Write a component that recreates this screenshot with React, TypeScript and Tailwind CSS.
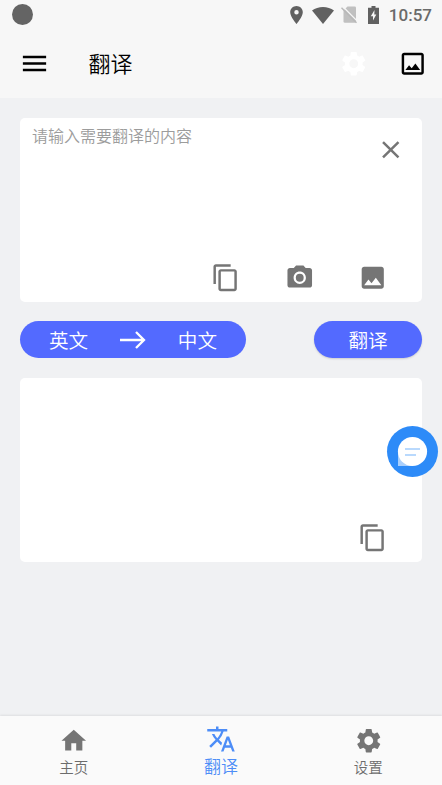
import type { ReactNode } from 'react'
import {
  MdClose,
  MdContentCopy,
  MdHome,
  MdImage,
  MdMenu,
  MdOutlineImage,
  MdPhotoCamera,
  MdSettings,
  MdTranslate,
} from 'react-icons/md'

function StatusBar() {
  return (
    <div className="flex h-[30px] items-center pl-3 pr-[10px] text-[#616161]">
      <span className="-mt-px size-[21px] rounded-full bg-[#646464]" />
      <svg className="ml-auto h-[18px] w-[13px]" viewBox="5 2 14 20" fill="currentColor">
        <path d="M12 2C8.13 2 5 5.13 5 9c0 5.25 7 13 7 13s7-7.75 7-13c0-3.87-3.13-7-7-7zm0 9.5a2.5 2.5 0 0 1 0-5 2.5 2.5 0 0 1 0 5z" />
      </svg>
      <svg className="ml-[9px] h-[17px] w-[22px]" viewBox="0 0 22 17" fill="currentColor">
        <path d="M0 3.6C6-1.2 16-1.2 22 3.6L11 17z" />
      </svg>
      <svg className="ml-[7px] h-[18px] w-[17px]" viewBox="0 0 17 18">
        <path d="M6.500 .5H13.700q1.300 0 1.300 1.300V15.500q0 1.300-1.300 1.300H3.800Q2.500 16.800 2.500 15.500V4.500z" fill="#c0c0c0" />
        <path d="M2 .8L17 15.800" stroke="#f7f7f7" strokeWidth="1.300" />
        <path d="M.5 1.800L15.500 16.800" stroke="#b8b8b8" strokeWidth="1.400" />
      </svg>
      <svg className="ml-[10px] h-[18px] w-[11px]" viewBox="0 0 11 18">
        <path d="M3.500 0h4v1.800H11V18H0V1.800h3.500z" fill="currentColor" />
        <path d="M6.500 4L2.800 10.200h2.200V14.500L8.300 8.600H6.300z" fill="#f7f7f7" />
      </svg>
      <span className="ml-[9.5px] font-['Roboto',sans-serif] text-[17px] font-medium leading-[20px] text-[#6a6a6a]">10:57</span>
    </div>
  )
}

function Header() {
  return (
    <header className="h-[98px] bg-[#f7f7f7]">
      <StatusBar />
      <div className="flex h-[67px] items-center pl-[19px] pr-[15px] text-black">
        <MdMenu className="size-[31px]" />
        <h1 className="-mt-[3px] ml-[38.5px] text-[22px] font-[350] leading-[32px]">翻译</h1>
        <MdSettings className="ml-auto size-[29.5px] text-white" />
        <MdOutlineImage className="ml-[29px] size-[29.5px]" />
      </div>
    </header>
  )
}

function InputCard() {
  return (
    <section className="flex h-[184px] flex-col rounded-[5px] bg-white text-[#757575]">
      <div className="flex justify-between pl-[12px] pr-[17px]">
        <p className="mt-[5px] text-[16px] font-[350] leading-[24px] text-[#9c9c9c]">请输入需要翻译的内容</p>
        <MdClose className="mt-[17px] size-[29.5px]" />
      </div>
      <div className="mb-[10px] ml-auto mr-[34.5px] mt-auto flex gap-[44px]">
        <MdContentCopy className="size-[29.5px]" />
        <MdPhotoCamera className="size-[29.5px]" />
        <MdImage className="size-[29.5px]" />
      </div>
    </section>
  )
}

function LanguageRow() {
  return (
    <div className="mb-5 mt-[19px] flex items-center justify-between text-[19.6px] font-[350] leading-[28px] text-white">
      <div className="flex h-[37px] w-[226px] items-center justify-between rounded-full bg-[#536aff] px-[29px]">
        <span>英文</span>
        <svg className="h-[18px] w-[26px]" viewBox="0 0 26 18" fill="none" stroke="white" strokeWidth="2.300">
          <path d="M0 9h24M16 1l8 8-8 8" />
        </svg>
        <span>中文</span>
      </div>
      <button className="h-[37px] w-[108px] rounded-full bg-[#536aff] shadow-[0_1px_2px_rgba(0,0,0,0.15)]">翻译</button>
    </div>
  )
}

function ResultCard() {
  return (
    <section className="flex h-[184px] items-end justify-end rounded-[5px] bg-white pb-[10px] pr-[34.5px]">
      <MdContentCopy className="size-[29.5px] text-[#757575]" />
    </section>
  )
}

function ChatButton() {
  return (
    <button className="absolute left-[387px] top-[426px] size-[51px] rounded-full bg-[#2d8bf8]">
      <svg viewBox="0 0 51 51" className="size-full">
        <path d="M11 25v15h15z" fill="#a9cffc" />
        <circle cx="25.500" cy="25.500" r="14.600" fill="white" />
        <path d="M18 23h15M18 29h11" stroke="#b9d9fd" strokeWidth="2" />
      </svg>
    </button>
  )
}

function NavItem({ icon, label }: { icon: ReactNode; label: string }) {
  return (
    <div className="flex flex-1 flex-col items-center pt-[10px] text-[14.500px] leading-[22px] text-[#757575]">
      {icon}
      <span className="font-[350] text-[#6c6c6c]">{label}</span>
    </div>
  )
}

export default function App() {
  return (
    <div className="relative flex h-[785px] w-[442px] flex-col overflow-hidden bg-[#f0f1f3] font-['Noto_Sans_CJK_SC',sans-serif]">
      <Header />
      <main className="flex-1 px-5 pt-5">
        <InputCard />
        <LanguageRow />
        <ResultCard />
      </main>
      <nav className="flex h-[69px] bg-[#fafafa] shadow-[0_-1px_2px_rgba(0,0,0,0.08)]">
        <NavItem icon={<MdHome className="size-[29.5px]" />} label="主页" />
        <div className="flex flex-1 flex-col items-center pt-[8px] text-[17px] font-[350] leading-[24px] text-[#4d8df7]">
          <MdTranslate className="size-[30px]" />
          <span>翻译</span>
        </div>
        <NavItem icon={<MdSettings className="size-[29.5px]" />} label="设置" />
      </nav>
      <ChatButton />
    </div>
  )
}
